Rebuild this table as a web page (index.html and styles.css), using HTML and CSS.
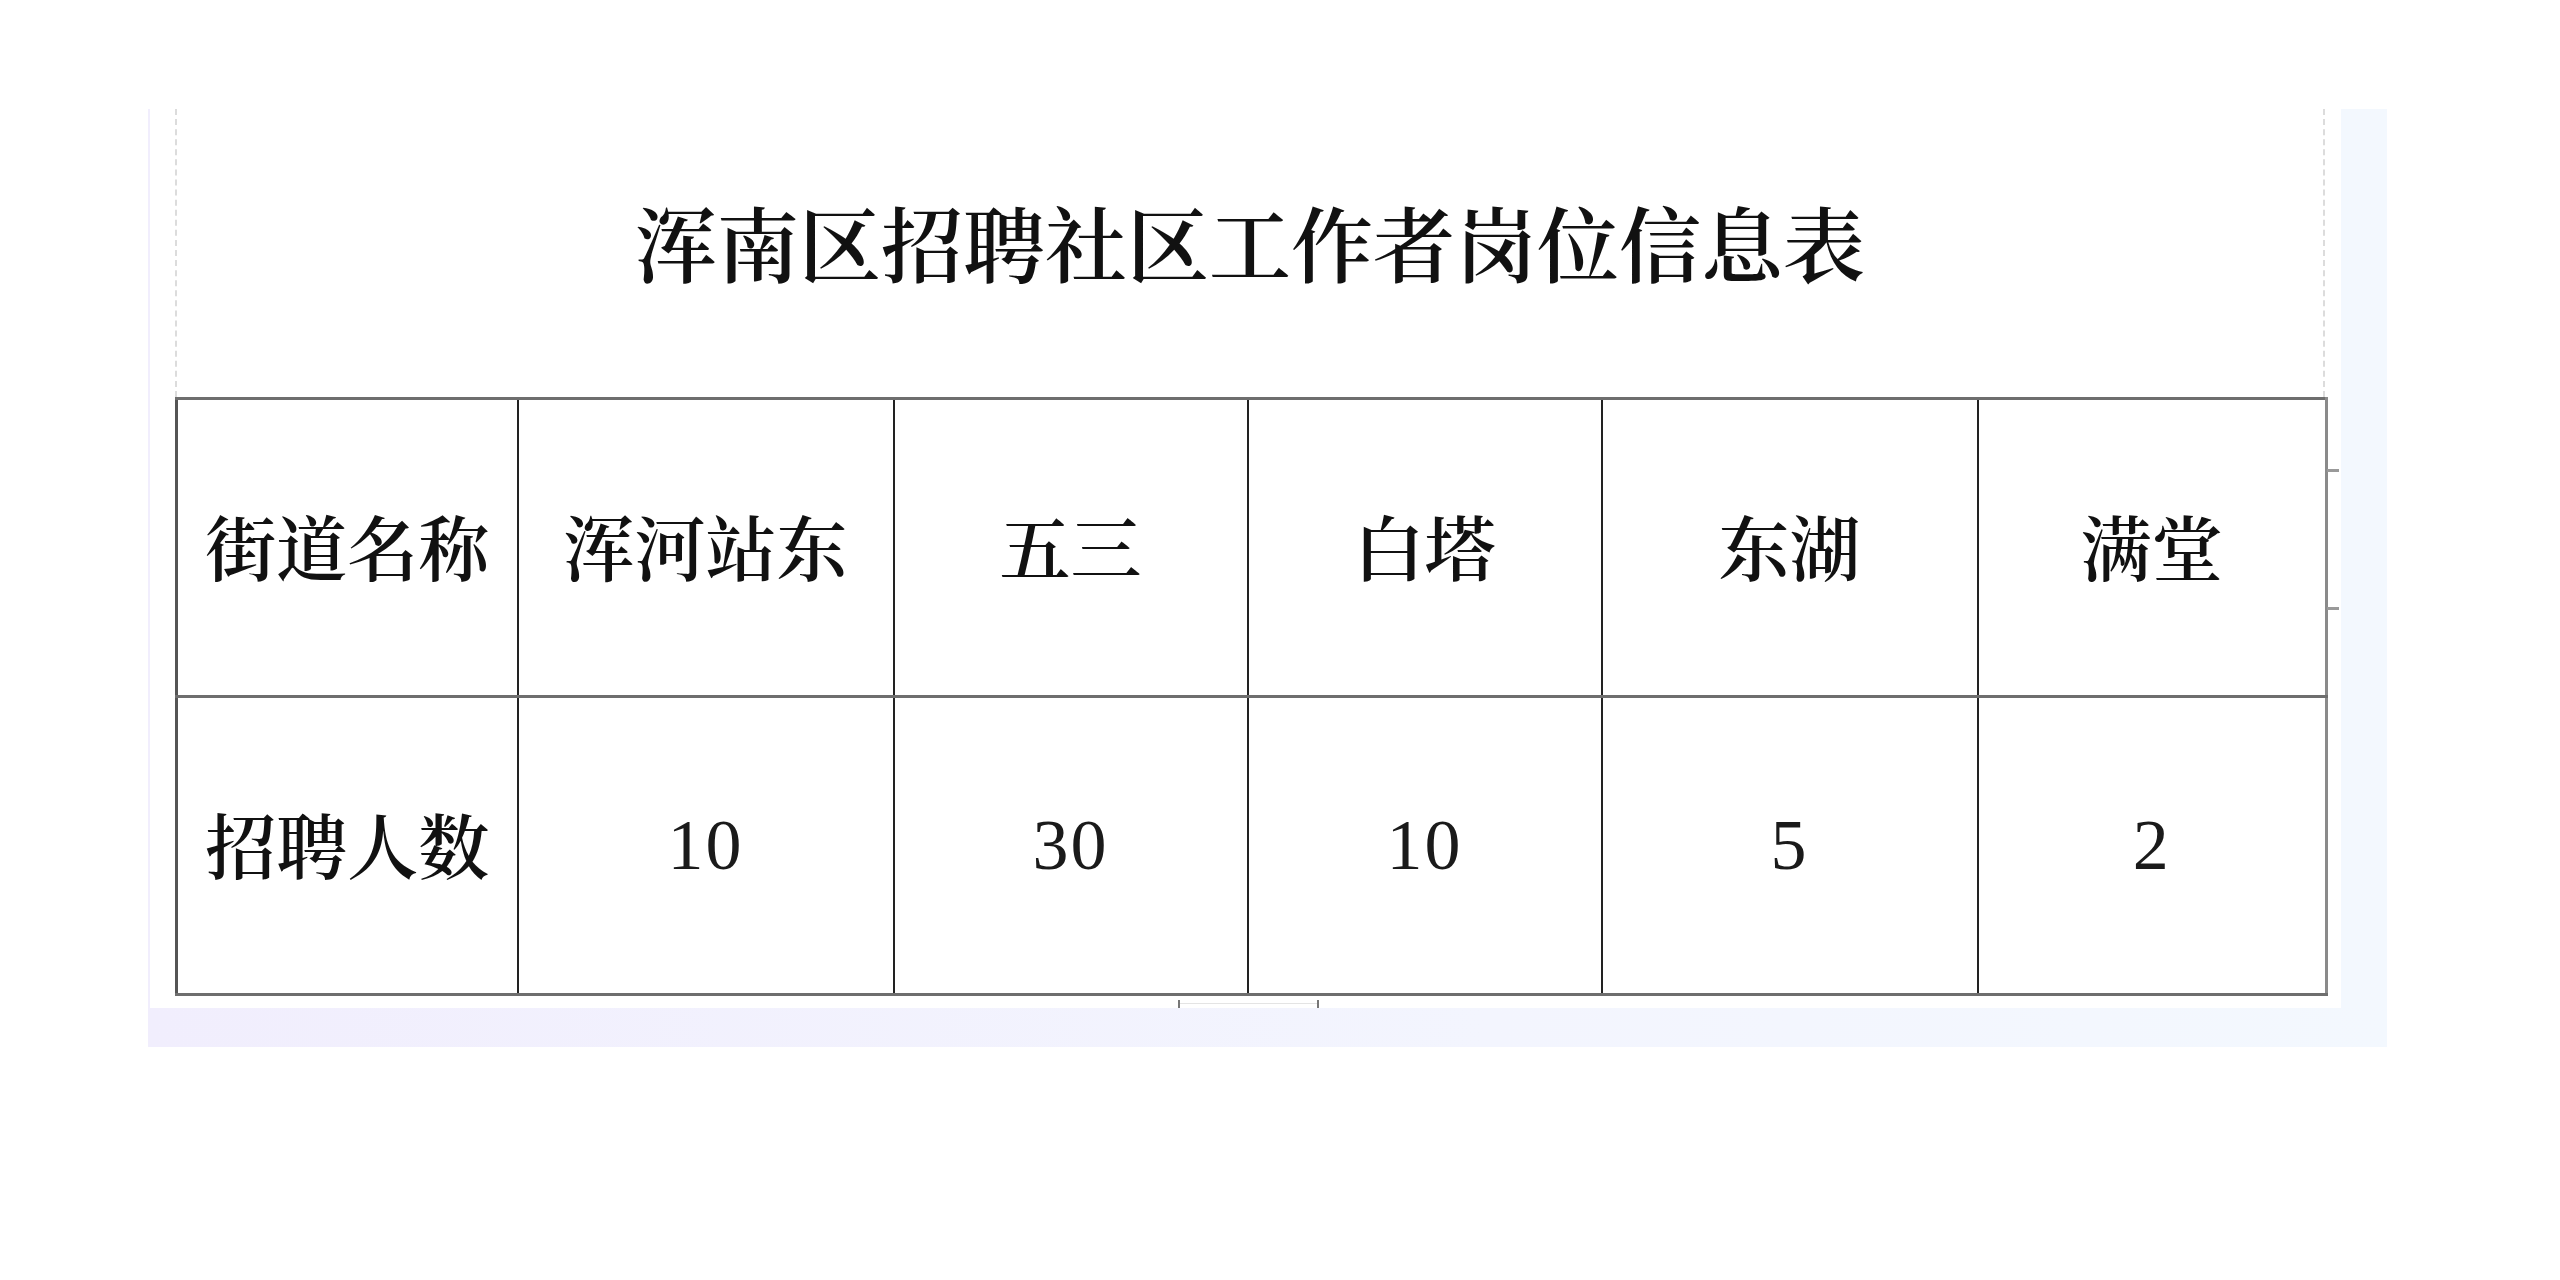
FILE: index.html
```html
<!DOCTYPE html>
<html lang="zh-CN">
<head>
<meta charset="utf-8">
<title>浑南区招聘社区工作者岗位信息表</title>
<link rel="stylesheet" href="styles.css">
</head>
<body>
<div class="sheet">
  <div class="page">
    <div class="title-area">
      <h1 class="title">浑南区招聘社区工作者岗位信息表</h1>
    </div>
    <div class="table-wrap">
      <table class="info">
        <colgroup>
          <col class="c1"><col class="c2"><col class="c3"><col class="c4"><col class="c5"><col class="c6">
        </colgroup>
        <tr class="row">
          <th>街道名称</th>
          <th>浑河站东</th>
          <th>五三</th>
          <th>白塔</th>
          <th>东湖</th>
          <th>满堂</th>
        </tr>
        <tr class="row">
          <th>招聘人数</th>
          <td>10</td>
          <td>30</td>
          <td>10</td>
          <td>5</td>
          <td>2</td>
        </tr>
      </table>
      <span class="tick tick-r1"></span>
      <span class="tick tick-r2"></span>
      <span class="tick-b tick-b1"></span>
      <span class="tick-b tick-b2"></span>
      <span class="tick-line"></span>
    </div>
  </div>
  <div class="side-strip"></div>
  <div class="bottom-strip"></div>
</div>
</body>
</html>
```
FILE: styles.css
```css
html, body {
  margin: 0;
  padding: 0;
  background: #ffffff;
}
body {
  width: 2560px;
  height: 1280px;
  font-family: "Noto Serif CJK SC", "Noto Sans CJK SC", "Liberation Serif", serif;
  color: #111;
}
.sheet {
  margin: 109px 0 0 148px;
  width: 2239px;
  height: 938px;
  display: grid;
  grid-template-columns: 2193px 46px;
  grid-template-rows: 899px 39px;
  background: linear-gradient(90deg, #f1eefd 0%, #f3f5fe 60%, #f3f8fe 100%);
}
.page {
  background: #ffffff;
  margin-left: 2px;
  padding-left: 25px;
  position: relative;
}
.side-strip {
  background: #f3f8fe;
}
.bottom-strip {
  grid-column: 1 / 3;
}
.title-area {
  width: 2150px;
  height: 288px;
  border-left: 2px dashed #dcdcdc;
  border-right: 2px dashed #dcdcdc;
  box-sizing: border-box;
  display: flex;
  align-items: center;
  justify-content: center;
}
.title {
  margin: 0 0 24px 0;
  font-size: 82px;
  font-weight: 600;
  letter-spacing: 0;
  line-height: 1;
}
.table-wrap {
  position: relative;
  width: 2150px;
}
.info {
  border-collapse: collapse;
  table-layout: fixed;
  width: 2150px;
}
.c1 { width: 341px; }
.c2 { width: 376px; }
.c3 { width: 354px; }
.c4 { width: 354px; }
.c5 { width: 376px; }
.c6 { width: 349px; }
.row {
  height: 298px;
}
.info th, .info td {
  border-left: 2px solid #222;
  border-right: 2px solid #222;
  border-top: 3px solid #6e6e6e;
  border-bottom: 3px solid #6e6e6e;
  padding: 0;
  text-align: center;
  vertical-align: middle;
}
.info tr > :first-child {
  border-left: 3px solid #555;
}
.info tr > :last-child {
  border-right: 3px solid #8a8a8a;
}
.info th {
  font-size: 71px;
  font-weight: 600;
  letter-spacing: 0;
  padding-bottom: 8px;
}
.info td {
  font-family: "Liberation Serif", "Noto Serif CJK SC", serif;
  font-size: 72px;
  font-weight: 400;
  letter-spacing: 2px;
  color: #1a1a1a;
}
.tick {
  position: absolute;
  right: -14px;
  width: 12px;
  height: 3px;
  background: #999;
}
.tick-r1 { top: 72px; }
.tick-r2 { top: 210px; }
.tick-b {
  position: absolute;
  width: 2px;
  height: 8px;
  background: #777;
  bottom: -12px;
}
.tick-b1 { left: 1003px; }
.tick-b2 { left: 1142px; }
.tick-line {
  position: absolute;
  left: 1005px;
  width: 137px;
  height: 1px;
  bottom: -8px;
  background: #e4e4e4;
}
```
